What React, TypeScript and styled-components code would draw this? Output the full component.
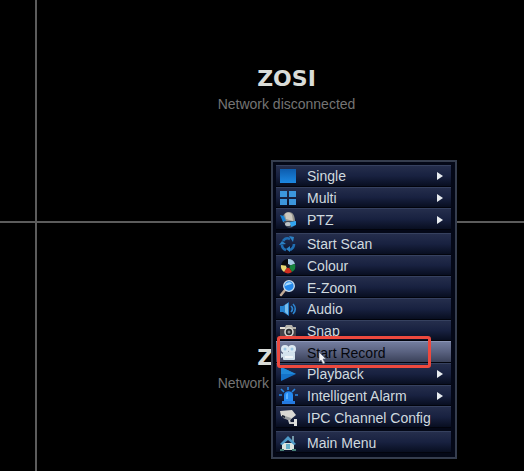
import React from "react";
import styled, { createGlobalStyle } from "styled-components";

const GlobalStyle = createGlobalStyle`
  * { box-sizing: border-box; }
  body { margin: 0; background: #000; font-family: "Liberation Sans", Arial, sans-serif; }
`;

const Screen = styled.main`
  position: relative;
  display: grid;
  grid-template-columns: 35px 1fr;
  grid-template-rows: 221px 1fr;
  gap: 2px;
  min-height: 100vh;
  overflow: hidden;
  background: #000;
`;

const Divider = styled.div<{ $vertical?: boolean }>`
  grid-column: ${(p) => (p.$vertical ? "1" : "1 / 3")};
  grid-row: ${(p) => (p.$vertical ? "1 / 3" : "1")};
  border-right: ${(p) => (p.$vertical ? "2px solid #5c5c5c" : "0")};
  border-bottom: ${(p) => (p.$vertical ? "0" : "2px solid #5c5c5c")};
  margin-right: ${(p) => (p.$vertical ? "-2px" : "0")};
  margin-bottom: ${(p) => (p.$vertical ? "0" : "-2px")};
`;

const Channel = styled.section<{ $row: number; $top: number }>`
  grid-column: 2;
  grid-row: ${(p) => p.$row};
  display: flex;
  flex-direction: column;
  align-items: center;
  gap: 7px;
  padding: ${(p) => p.$top}px 0 0 12px;
`;

const Brand = styled.div`
  color: #d9dcd8;
  font: bold 22px/20px "DejaVu Sans", sans-serif;
`;

const Status = styled.p`
  margin: 0;
  color: #747474;
  font-size: 14px;
  line-height: 16px;
`;

const Menu = styled.nav`
  position: absolute;
  left: 271px;
  top: 160px;
  width: 186px;
  display: flex;
  flex-direction: column;
  gap: 3px;
  padding: 3px 4px 4px 3px;
  border: 2px solid #353d4e;
  background: #040817;
`;

const Group = styled.div<{ $height: number }>`
  display: grid;
  grid-auto-rows: 1fr;
  height: ${(p) => p.$height}px;
`;

const Cell = styled.div`
  position: relative;
  display: grid;
  min-height: 0;
`;

const Item = styled.button<{ $active?: boolean }>`
  display: grid;
  grid-template-columns: 24px 1fr 14px;
  align-items: center;
  column-gap: 7px;
  min-height: 0;
  padding: ${(p) => (p.$active ? "2px" : "1px")} 0 0;
  border: 0;
  border-top: 1px solid ${(p) => (p.$active ? "#8c96b6" : "#36415f")};
  border-bottom: 1px solid #02040d;
  background: ${(p) =>
    p.$active
      ? "linear-gradient(#737d9f, #59617f 50%, #3a4159)"
      : "linear-gradient(#252e4c, #182140 50%, #080e20)"};
  color: ${(p) => (p.$active ? "#05070c" : "#d0dadf")};
  font: 14px/18px "Liberation Sans", Arial, sans-serif;
  text-align: left;
  white-space: nowrap;
`;

const Label = styled.span<{ $wide?: boolean }>`
  grid-column: ${(p) => (p.$wide ? "2 / 4" : "2")};
`;

const IconSvg = styled.svg`
  display: block;
  width: 24px;
  height: 18px;
`;

const Arrow = styled.svg`
  display: block;
  width: 6px;
  height: 8px;
  grid-column: 3;
  fill: #e9edf0;
  justify-self: start;
`;

const Highlight = styled.div`
  position: absolute;
  inset: -5px 20px -5px 1px;
  border: 3px solid #ed493e;
  border-radius: 3px;
  pointer-events: none;
`;

const Pointer = styled.svg`
  position: absolute;
  left: 42px;
  top: 10px;
  width: 9px;
  height: 14px;
  pointer-events: none;
`;

const icons: Record<string, React.ReactNode> = {
  single: (
    <>
      <defs>
        <linearGradient id="single-fill" x1="0" y1="0" x2="0" y2="1">
          <stop offset="0" stopColor="#0d5cae" />
          <stop offset="1" stopColor="#1c88e2" />
        </linearGradient>
      </defs>
      <rect x="4" y="2" width="16" height="14" fill="url(#single-fill)" />
    </>
  ),
  multi: (
    <g fill="#3c96dc">
      <rect x="4" y="2" width="7" height="6" />
      <rect x="13" y="2" width="7" height="6" />
      <rect x="4" y="10" width="7" height="6" />
      <rect x="13" y="10" width="7" height="6" />
    </g>
  ),
  ptz: (
    <>
      <path d="M7 10C6 4 9 1 13 1c4 0 6 4 6 10l-5 3-7-3z" fill="#96958f" />
      <path d="M9 3c3-3 6-1 7 1l1 6-7-2z" fill="#cbc8bf" />
      <path d="M4 4l4 1 2 5-3 1z" fill="#1783d6" />
      <path d="M8 10h10l1 4c-3 4-8 4-10 0z" fill="#3e4654" />
      <ellipse cx="12" cy="13" rx="3" ry="2" fill="#bbc3c8" />
      <path d="M14 11l6-1v4l-5 2z" fill="#31a4ef" />
    </>
  ),
  scan: (
    <g fill="none" stroke="#1f6db2" strokeWidth="2.6">
      <path d="M7 6c2-3 5-3 7-2" />
      <path d="M18 9c0 4-2 5-4 6" />
      <path d="M10 15c-3-1-4-3-4-5" />
      <path d="M13 1l5 1-1 5zM14 11v6l-4-3zM3 10l3-4 4 3z" fill="#2b82c6" stroke="none" />
    </g>
  ),
  colour: (
    <>
      <circle cx="12" cy="9" r="7" fill="#080a0e" />
      <path d="M12 9V2a7 7 0 0 1 7 5z" fill="#a8cbe2" />
      <path d="M12 9l7-2a7 7 0 0 1-3 8z" fill="#16853c" />
      <path d="M12 9l4 6a7 7 0 0 1-8 0z" fill="#d12e20" />
      <path d="M12 9l-4 6a7 7 0 0 1-3-7z" fill="#e8d873" />
      <circle cx="12" cy="9" r="2" fill="#101626" />
    </>
  ),
  zoom: (
    <>
      <path d="M9 11l-4 5" stroke="#c1aa95" strokeWidth="2.5" strokeLinecap="round" />
      <circle cx="13" cy="7" r="5.3" fill="#2588eb" stroke="#c8dced" strokeWidth="1.3" />
      <path d="M9 7c0-4 6-5 7-2-2 0-4 1-7 2z" fill="#a9dbff" />
    </>
  ),
  audio: (
    <>
      <path d="M4 6h3l6-4v14l-6-4H4z" fill="#2682ce" />
      <path d="M9 5l3-2v12l-3-3z" fill="#79bdeb" />
      <path d="M15 6c2 2 2 4 0 6M17 4c3 3 3 7 0 10" fill="none" stroke="#2c83ce" strokeWidth="1.7" />
    </>
  ),
  snap: (
    <>
      <path d="M4 5h5l1-2h6l1 2h3v11H4z" fill="#b4b1aa" />
      <path d="M4 7h16v8H4z" fill="#45444a" />
      <circle cx="13" cy="10" r="4" fill="#26292d" stroke="#d9d9d3" strokeWidth="1.6" />
      <circle cx="13" cy="10" r="1.5" fill="#898d8f" />
      <path d="M4 5h5v2H4z" fill="#e4dfd5" />
    </>
  ),
  record: (
    <>
      <circle cx="9" cy="5" r="4" fill="#dce9f2" />
      <circle cx="16" cy="5" r="4" fill="#dce9f2" />
      <circle cx="9" cy="5" r="1.5" fill="#9bc7e6" />
      <circle cx="16" cy="5" r="1.5" fill="#9bc7e6" />
      <rect x="7" y="8" width="12" height="8" rx="1" fill="#d4e3ed" />
      <path d="M7 10l-2-1v5l2-1z" fill="#d4e3ed" />
      <path d="M9 12h8v2H9z" fill="#f2f6f8" />
    </>
  ),
  playback: (
    <>
      <path d="M5 2l15 7-15 7z" fill="#1472c8" />
      <path d="M5 2l15 7H5z" fill="#2088d8" />
    </>
  ),
  alarm: (
    <>
      <path d="M8 14V8c0-5 9-5 9 0v6z" fill="#258af2" />
      <path d="M10 12V8c0-2 2-2 2-2v6z" fill="#5db2ff" />
      <path d="M6 14h13v3H6z" fill="#257ae0" />
      <path d="M12 0v3M5 2l3 3M19 2l-3 3M3 8h3M19 8h3" stroke="#2787e4" strokeWidth="1.6" />
    </>
  ),
  ipc: (
    <>
      <path d="M4 2l12-1 4 5-6 5-9-4z" fill="#dad9d4" />
      <path d="M6 6l9 3-1 3-7-3z" fill="#9b9ea0" />
      <path d="M6 6l3 1v2l-3-1z" fill="#202735" />
      <path d="M13 11l1 3h5" fill="none" stroke="#c8caca" strokeWidth="2" />
      <path d="M18 10h3v7h-3z" fill="#e0e1df" />
    </>
  ),
  home: (
    <>
      <path d="M16 2h2v6h-2z" fill="#7699a9" />
      <path d="M6 9h12v7H6z" fill="#dce4de" />
      <path d="M4 10l8-8 8 8-2 1-6-5-6 5z" fill="#4e9ac7" />
      <path d="M10 10h4v5h-4z" fill="#67b0c8" />
      <path d="M4 15h4v2H4zM16 15h4v2h-4z" fill="#477f77" />
    </>
  ),
};

type Entry = { icon: string; label: string; sub?: boolean; active?: boolean };

const groups: { height: number; items: Entry[] }[] = [
  {
    height: 65,
    items: [
      { icon: "single", label: "Single", sub: true },
      { icon: "multi", label: "Multi", sub: true },
      { icon: "ptz", label: "PTZ", sub: true },
    ],
  },
  {
    height: 195,
    items: [
      { icon: "scan", label: "Start Scan" },
      { icon: "colour", label: "Colour" },
      { icon: "zoom", label: "E-Zoom" },
      { icon: "audio", label: "Audio" },
      { icon: "snap", label: "Snap" },
      { icon: "record", label: "Start Record", active: true },
      { icon: "playback", label: "Playback", sub: true },
      { icon: "alarm", label: "Intelligent Alarm", sub: true },
      { icon: "ipc", label: "IPC Channel Config" },
    ],
  },
  { height: 22, items: [{ icon: "home", label: "Main Menu" }] },
];

function MenuEntry({ icon, label, sub, active }: Entry) {
  const item = (
    <Item type="button" $active={active} aria-haspopup={sub ? "menu" : undefined}>
      <IconSvg viewBox="0 0 24 18" aria-hidden="true">{icons[icon]}</IconSvg>
      <Label $wide={!sub}>{label}</Label>
      {sub && (
        <Arrow viewBox="0 0 6 8" aria-hidden="true">
          <path d="M0 0l6 4-6 4z" />
        </Arrow>
      )}
    </Item>
  );
  if (!active) return item;
  return (
    <Cell>
      {item}
      <Highlight />
      <Pointer viewBox="0 0 9 14" aria-hidden="true">
        <path d="M1 1v10l2-2 2 4 2-1-2-4h3z" fill="#f4f4f6" stroke="#5c6478" strokeWidth="0.6" />
      </Pointer>
    </Cell>
  );
}

function Feed({ row, top }: { row: number; top: number }) {
  return (
    <Channel $row={row} $top={top}>
      <Brand>ZOSI</Brand>
      <Status>Network disconnected</Status>
    </Channel>
  );
}

export default function App() {
  return (
    <>
      <GlobalStyle />
      <Screen>
        <Divider $vertical />
        <Divider />
        <Feed row={1} top={69} />
        <Feed row={2} top={125} />
        <Menu aria-label="Channel menu">
          {groups.map((group) => (
            <Group key={group.items[0].label} $height={group.height}>
              {group.items.map((entry) => (
                <MenuEntry key={entry.label} {...entry} />
              ))}
            </Group>
          ))}
        </Menu>
      </Screen>
    </>
  );
}
